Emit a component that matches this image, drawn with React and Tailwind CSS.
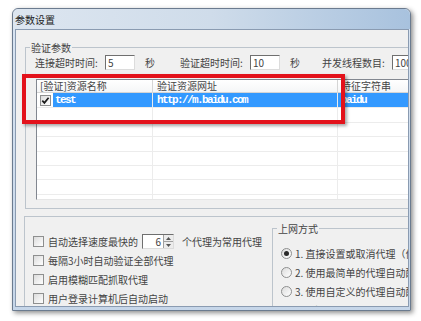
import React from 'react';

function Check({ checked }) {
  return (
    <span className="w-[11px] h-[11px] shrink-0 border border-[#8e8f8f] bg-linear-to-br from-[#dcdcdc] to-white flex items-center justify-center">
      {checked && (
        <svg width="9" height="9" viewBox="0 0 9 9">
          <path d="M1.3 4.6 L3.4 6.9 L7.6 1.7" stroke="#1b1b1b" strokeWidth="1.7" fill="none" />
        </svg>
      )}
    </span>
  );
}

function Radio({ on }) {
  return (
    <span className="w-[11px] h-[11px] shrink-0 rounded-full border border-[#8e8f8f] bg-linear-to-br from-[#dcdcdc] to-white flex items-center justify-center">
      {on && <span className="w-[5px] h-[5px] rounded-full bg-[#2a2a2a]" />}
    </span>
  );
}

function Field({ value }) {
  return (
    <span className="w-[30px] h-[15px] shrink-0 bg-white border border-t-[#6f6f6f] border-l-[#6f6f6f] border-r-[#dcdcdc] border-b-[#dcdcdc] flex items-center pl-[2px] leading-none">
      {value}
    </span>
  );
}

function Legend({ children }) {
  return (
    <span className="absolute left-[4px] top-[-7px] px-[1px] bg-[#f0f0f0] leading-[13px]">{children}</span>
  );
}

const rows = [0, 1, 2, 3, 4, 5, 6];

export default function App() {
  return (
    <div className="w-[421px] h-[321px] bg-white relative overflow-hidden font-['Noto_Sans_CJK_SC',sans-serif] text-[10px] text-[#444]">
      <div className="absolute left-[12px] top-[8px] w-[399px] h-[303px] rounded-t-[6px] border border-[#6b7b8f] bg-linear-to-b from-[#d9e4f1] to-[#c6d6e9] shadow-[2px_2px_5px_rgba(0,0,0,0.45)] flex flex-col">
        <div className="h-[20px] shrink-0 flex items-center pl-[2px] rounded-t-[6px] bg-linear-to-r from-[#dde6f0] via-[#cfdcea] to-[#a8c2de] text-[#222]">
          参数设置
        </div>
        <div className="flex-1 ml-[2px] mr-[1px] mb-[3px] border border-[#8a9bb1] bg-[#f0f0f0] overflow-hidden">
          {/* 验证参数 */}
          <div className="relative mt-[17px] ml-[9px] w-[430px] border border-[#bcc4cc] pb-[8px]">
            <Legend>验证参数</Legend>
            <div className="flex items-center h-[15px] mt-[7px] ml-[9px]">
              <span className="w-[70px] shrink-0">连接超时时间:</span>
              <Field value="5" />
              <span className="w-[45px] shrink-0 pl-[10px]">秒</span>
              <span className="w-[70px] shrink-0">验证超时时间:</span>
              <Field value="10" />
              <span className="w-[42px] shrink-0 pl-[10px]">秒</span>
              <span className="w-[70px] shrink-0">并发线程数目:</span>
              <Field value="100" />
            </div>
            <div className="mt-[9px] ml-[10px] w-[420px] h-[121px] bg-white border border-t-[#828790] border-l-[#828790] border-r-[#e0e0e0] border-b-[#e6e6e6] overflow-hidden">
              <div className="flex h-[13px] border-b border-[#d5d5d5] bg-linear-to-b from-white to-[#f5f6f7] leading-[12px]">
                <span className="w-[116px] shrink-0 pl-[3px] border-r border-[#d5d5d5]">[验证]资源名称</span>
                <span className="w-[185px] shrink-0 pl-[4px] border-r border-[#d5d5d5]">验证资源网址</span>
                <span className="flex-1 pl-[3px]">特征字符串</span>
              </div>
              <div className="flex h-[14.4px] items-stretch font-['Liberation_Mono',monospace] font-bold text-[11px] tracking-[-1.6px] text-white">
                <span className="w-[116px] shrink-0 flex items-center pl-[3px] border-r border-[#ececec]">
                  <Check checked />
                  <span className="flex-1 h-full ml-[2px] pl-[2px] bg-[#3399ff] flex items-center">test</span>
                </span>
                <span className="w-[185px] shrink-0 pl-[4px] bg-[#3399ff] border-r border-[#ececec] flex items-center">http://m.baidu.com</span>
                <span className="flex-1 pl-[3px] bg-[#3399ff] flex items-center">baidu</span>
              </div>
              {rows.map((r) => (
                <div key={r} className="flex h-[14.4px] border-t border-[#ececec]">
                  <span className="w-[116px] shrink-0 border-r border-[#ececec]" />
                  <span className="w-[185px] shrink-0 border-r border-[#ececec]" />
                  <span className="flex-1" />
                </div>
              ))}
            </div>
          </div>

          {/* 下部 */}
          <div className="mt-[7px] ml-[8px] w-[430px] h-[120px] border border-[#bcc4cc] flex">
            <div className="w-[247px] shrink-0 pt-[15px] pl-[8px]">
              <div className="flex items-center h-[19px]">
                <Check />
                <span className="ml-[4px]">自动选择速度最快的</span>
                <span className="ml-[4px] w-[32px] h-[15px] shrink-0 bg-white border border-t-[#6f6f6f] border-l-[#6f6f6f] border-r-[#dcdcdc] border-b-[#dcdcdc] flex items-center">
                  <span className="flex-1 text-right pr-[2px] leading-none">6</span>
                  <span className="w-[10px] h-full flex flex-col border-l border-[#a0a0a0]">
                    <span className="flex-1 flex items-center justify-center border-b border-[#a0a0a0] bg-[#ececec]">
                      <svg width="5" height="3" viewBox="0 0 5 3"><path d="M0 3 L2.5 0 L5 3 Z" fill="#555" /></svg>
                    </span>
                    <span className="flex-1 flex items-center justify-center bg-[#ececec]">
                      <svg width="5" height="3" viewBox="0 0 5 3"><path d="M0 0 L2.5 3 L5 0 Z" fill="#555" /></svg>
                    </span>
                  </span>
                </span>
                <span className="ml-[8px] whitespace-nowrap">个代理为常用代理</span>
              </div>
              <div className="flex items-center h-[19px]">
                <Check />
                <span className="ml-[4px]">每隔3小时自动验证全部代理</span>
              </div>
              <div className="flex items-center h-[19px]">
                <Check />
                <span className="ml-[4px]">启用模糊匹配抓取代理</span>
              </div>
              <div className="flex items-center h-[19px]">
                <Check />
                <span className="ml-[4px]">用户登录计算机后自动启动</span>
              </div>
            </div>

            <div className="relative mt-[11px] w-[200px] h-[120px] shrink-0 border border-[#bcc4cc]">
              <Legend>上网方式</Legend>
              <div className="pt-[15px] pl-[8px] whitespace-nowrap">
                <div className="flex items-center h-[19px]">
                  <Radio on />
                  <span className="ml-[3px]">1. 直接设置或取消代理（仿</span>
                </div>
                <div className="flex items-center h-[19px]">
                  <Radio />
                  <span className="ml-[3px]">2. 使用最简单的代理自动配置</span>
                </div>
                <div className="flex items-center h-[19px]">
                  <Radio />
                  <span className="ml-[3px]">3. 使用自定义的代理自动配置</span>
                </div>
                <div className="flex items-center h-[19px] pl-[19px]">
                  <span>（请设定自定义的代理自动配置</span>
                </div>
              </div>
            </div>
          </div>
        </div>
      </div>

      {/* 红色标注框 */}
      <div className="absolute left-[22px] top-[74px] w-[323px] h-[50px] border-4 border-[#e3121b] shadow-[2px_2px_3px_rgba(0,0,0,0.35)]" />
    </div>
  );
}
